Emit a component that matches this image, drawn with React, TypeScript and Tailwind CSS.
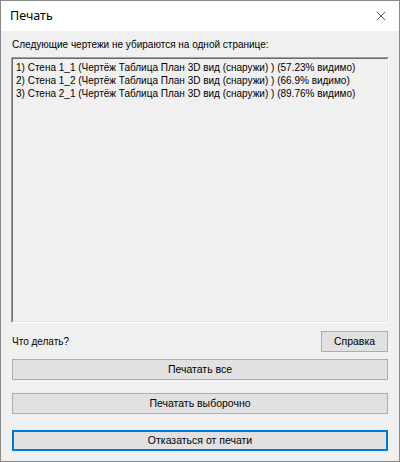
import { X } from "lucide-react";

const rows = [
  "1) Стена 1_1 (Чертёж Таблица План 3D вид (снаружи) ) (57.23% видимо)",
  "2) Стена 1_2 (Чертёж Таблица План 3D вид (снаружи) ) (66.9% видимо)",
  "3) Стена 2_1 (Чертёж Таблица План 3D вид (снаружи) ) (89.76% видимо)",
];

const WinButton = ({ label, focused = false, className = "" }: { label: string; focused?: boolean; className?: string }) => (
  <button
    className={`flex h-[21px] items-center justify-center bg-[#e1e1e1] text-[10.5px] text-black ${
      focused ? "border-2 border-[#0078d7]" : "border border-[#adadad]"
    } ${className}`}
  >
    {label}
  </button>
);

export default function App() {
  return (
    <div
      className="flex h-[462px] w-[400px] flex-col border border-[#8a8a8a] bg-[#f0f0f0]"
      style={{ fontFamily: '"Liberation Sans", Arial, sans-serif' }}
    >
      {/* title bar */}
      <div className="flex h-[30px] shrink-0 items-center justify-between bg-white pl-[9px] pr-[10px]">
        <span className="text-[12.5px] text-black" style={{ fontFamily: '"Noto Sans", sans-serif' }}>
          Печать
        </span>
        <X className="h-[16px] w-[16px] text-black" strokeWidth={1} />
      </div>

      <div className="flex flex-1 flex-col px-[10px] pt-[7px]">
        <p className="whitespace-nowrap pl-px text-[10px] leading-[13px] text-black">
          Следующие чертежи не убираются на одной странице:
        </p>

        {/* list box */}
        <div className="mt-[6px] h-[266px] border border-[#a0a0a0] border-r-white border-b-white">
          <div className="h-full border border-[#696969] border-r-[#e3e3e3] border-b-[#e3e3e3] px-[3px] pt-[2px]">
            {rows.map((r) => (
              <div key={r} className="whitespace-nowrap text-[10px] leading-[13px] text-black">
                {r}
              </div>
            ))}
          </div>
        </div>

        <div className="mt-[8px] flex items-center justify-between pl-px">
          <span className="text-[10px] text-black">Что делать?</span>
          <WinButton label="Справка" className="mr-[1px] w-[67px]" />
        </div>

        <WinButton label="Печатать все" className="mx-px mt-[7px]" />
        <WinButton label="Печатать выборочно" className="mx-px mt-[13px]" />
        <WinButton label="Отказаться от печати" focused className="mx-px mt-[16px]" />
      </div>
    </div>
  );
}
